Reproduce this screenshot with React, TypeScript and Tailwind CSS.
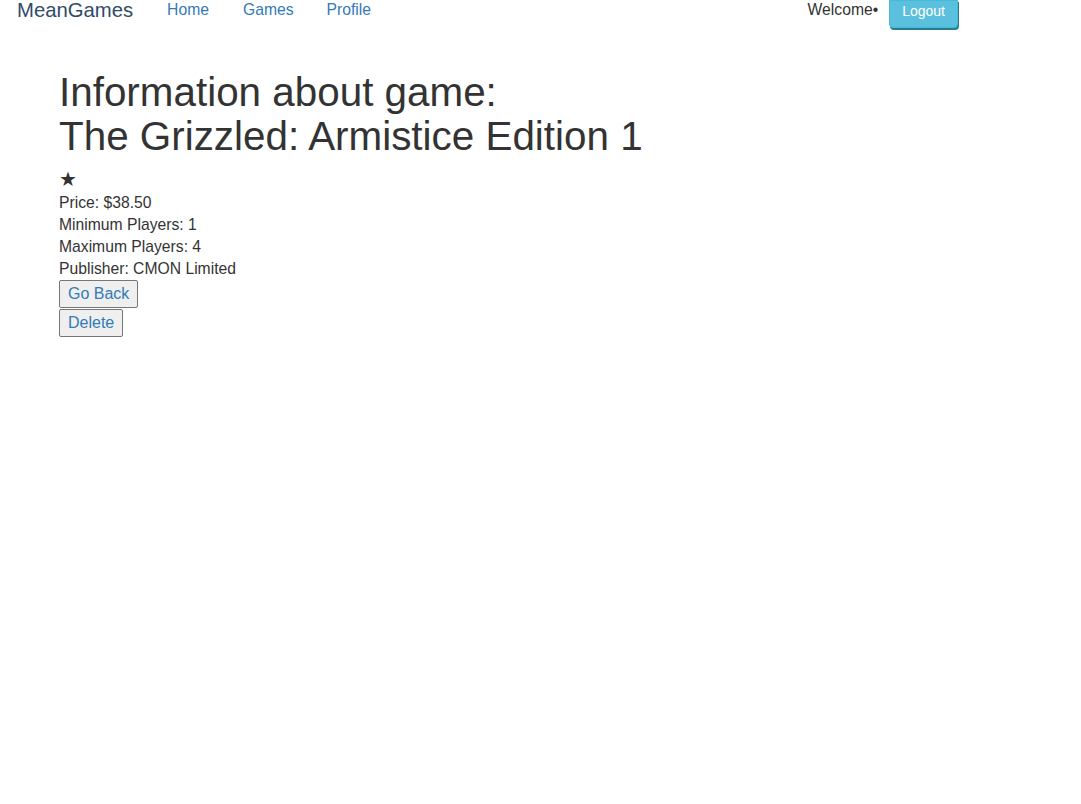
export default function App() {
  return (
    <div className="min-h-screen bg-white text-[#333] font-['Liberation_Sans',Arial,sans-serif] text-[15.7px] leading-[22px]">
      {/* Navbar */}
      <nav className="flex items-start h-[40px]">
        <span className="pl-[17px] pr-[34px] text-[20.3px] leading-[21px] text-[#2f4b68]">MeanGames</span>
        <a className="text-[#337ab7] leading-[20px] pr-[34px]" href="#">Home</a>
        <a className="text-[#337ab7] leading-[20px] pr-[33px]" href="#">Games</a>
        <a className="text-[#337ab7] leading-[20px]" href="#">Profile</a>
        <div className="ml-auto mr-[123px] flex items-start">
          <span className="leading-[20px] text-[#333]">Welcome•</span>
          <button className="ml-[11px] h-[28px] px-[12px] pb-[6px] rounded-b-[4px] bg-[#5bc0de] border border-[#46b8da] text-white text-[14px] leading-[20px] shadow-[1px_2px_0_#2a7c8f]">
            Logout
          </button>
        </div>
      </nav>

      {/* Content */}
      <main className="pl-[59px] pt-[30px]">
        <h1 className="text-[40.4px] leading-[44px] font-normal mb-[9px]">
          Information about game:
          <br />
          The Grizzled: Armistice Edition 1
        </h1>
        <div className="text-[20px] leading-[25px]">★</div>
        <div>Price: $38.50</div>
        <div>Minimum Players: 1</div>
        <div>Maximum Players: 4</div>
        <div>Publisher: CMON Limited</div>
        <div className="flex flex-col items-start gap-[1px]">
          <button className="h-[28px] px-[8px] bg-[#efefef] border border-[#767676] rounded-[2px] text-[#337ab7] text-[16px]">Go Back</button>
          <button className="h-[28px] px-[8px] bg-[#efefef] border border-[#767676] rounded-[2px] text-[#337ab7] text-[16px]">Delete</button>
        </div>
      </main>
    </div>
  );
}
